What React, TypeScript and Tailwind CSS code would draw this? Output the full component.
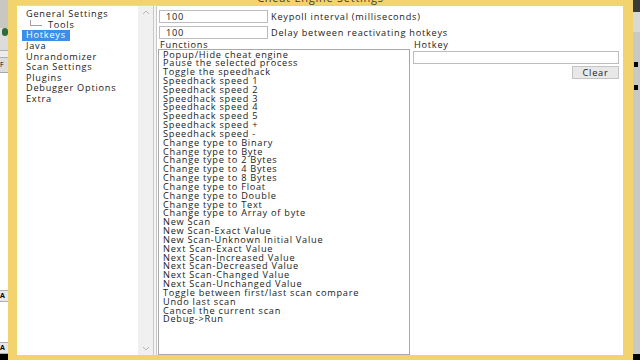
import React from "react";

const tree = [
  { label: "General Settings", indent: 0 },
  { label: "Tools", indent: 1 },
  { label: "Hotkeys", indent: 0, selected: true },
  { label: "Java", indent: 0 },
  { label: "Unrandomizer", indent: 0 },
  { label: "Scan Settings", indent: 0 },
  { label: "Plugins", indent: 0 },
  { label: "Debugger Options", indent: 0 },
  { label: "Extra", indent: 0 },
];

const functions = [
  "Popup/Hide cheat engine",
  "Pause the selected process",
  "Toggle the speedhack",
  "Speedhack speed 1",
  "Speedhack speed 2",
  "Speedhack speed 3",
  "Speedhack speed 4",
  "Speedhack speed 5",
  "Speedhack speed +",
  "Speedhack speed -",
  "Change type to Binary",
  "Change type to Byte",
  "Change type to 2 Bytes",
  "Change type to 4 Bytes",
  "Change type to 8 Bytes",
  "Change type to Float",
  "Change type to Double",
  "Change type to Text",
  "Change type to Array of byte",
  "New Scan",
  "New Scan-Exact Value",
  "New Scan-Unknown Initial Value",
  "Next Scan-Exact Value",
  "Next Scan-Increased Value",
  "Next Scan-Decreased Value",
  "Next Scan-Changed Value",
  "Next Scan-Unchanged Value",
  "Toggle between first/last scan compare",
  "Undo last scan",
  "Cancel the current scan",
  "Debug->Run",
];

function TreePanel() {
  return (
    <div className="flex w-[136px] shrink-0 border-t border-[#d8d8d8] bg-white">
      <div className="flex flex-1 flex-col pt-[3px] pl-[9px]">
        {tree.map((t) => (
          <div key={t.label} className={`flex h-[10.6px] items-center ${t.indent ? "pl-[4px]" : ""}`}>
            {t.indent ? (
              <span className="mr-[6px] mb-[4px] h-[6px] w-[12px] border-b border-l border-[#a0a0a0]" />
            ) : null}
            <span
              className={`leading-[10px] ${
                t.selected ? "-ml-[4px] bg-[#3b8fe8] px-[4px] py-[0.5px] text-white" : "text-[#1a1a1a]"
              }`}
            >
              {t.label}
            </span>
          </div>
        ))}
      </div>
      <div className="flex w-[15px] flex-col items-center justify-between bg-[#f0f0f0] py-[4px]">
        <svg width="8" height="5" viewBox="0 0 8 5">
          <path d="M1 4 L4 1 L7 4" fill="none" stroke="#b8b8b8" strokeWidth="1" />
        </svg>
        <svg width="8" height="5" viewBox="0 0 8 5">
          <path d="M1 1 L4 4 L7 1" fill="none" stroke="#b8b8b8" strokeWidth="1" />
        </svg>
      </div>
    </div>
  );
}

function EditRow({ value, label }: { value: string; label: string }) {
  return (
    <div className="flex h-[13px] items-center">
      <div className="flex h-[13px] w-[109px] items-center border border-[#bcbcbc] bg-white pl-[6px] leading-[10px] text-[#1a1a1a]">
        {value}
      </div>
      <span className="ml-[3px] leading-[10px] text-[#1a1a1a]">{label}</span>
    </div>
  );
}

export default function App() {
  return (
    <div
      className="flex h-[360px] w-[640px] overflow-hidden bg-[#2b2b2b] text-[9.2px] tracking-[0.75px]"
      style={{ fontFamily: '"Open Sans", "DejaVu Sans", sans-serif' }}
    >
      {/* background window on the left */}
      <div className="flex w-[8px] shrink-0 flex-col bg-[#dcdcdc]">
        <div className="h-[28px] bg-[#c8c8c0]" />
        <div className="ml-[2px] h-[8px] w-[6px] rounded-full bg-[#2f6a3a]" />
        <div className="mt-[14px] h-[8px] border-y border-[#b0b0b0] bg-[#ececec]" />
        <div className="mt-[4px] h-[6px] text-[7px] leading-[6px] text-black">F</div>
        <div className="mt-[4px] flex-1 border-t border-[#a8a8a8] bg-white" />
        <div className="h-[12px] border-y border-[#b0b0b0] bg-[#e8e8e8] text-[7px] font-bold leading-[10px]">A</div>
        <div className="h-[40px] bg-white" />
        <div className="h-[12px] border-y border-[#b0b0b0] bg-[#e8e8e8] text-[7px] font-bold leading-[10px]">A</div>
        <div className="h-[6px] bg-black" />
      </div>

      {/* dialog */}
      <div className="flex w-[625px] shrink-0 flex-col bg-[#f3d36e]">
        <div className="flex h-[5px] justify-center overflow-hidden">
          <span className="-mt-[8px] text-[11px] leading-[11px] text-[#3a3a3a]">Cheat Engine Settings</span>
        </div>
        <div className="mb-[5px] ml-[9px] mr-[9px] flex flex-1 bg-white">
          <TreePanel />
          <div className="flex w-[4px] shrink-0 justify-between border-t border-[#d8d8d8] bg-[#f4f4f4]">
            <div className="w-px bg-[#c8c8c8]" />
            <div className="w-px bg-[#c8c8c8]" />
          </div>
          <div className="flex flex-1 flex-col border-t border-r border-[#d0d0d0] pl-[2px] pt-[4px]">
            <div className="flex flex-col gap-[3px]">
              <EditRow value="100" label="Keypoll interval (milliseconds)" />
              <EditRow value="100" label="Delay between reactivating hotkeys" />
            </div>
            <div className="flex flex-1">
              <div className="-ml-[1px] flex w-[252px] flex-col">
                <div className="mt-[1px] h-[9px] pl-[2px] leading-[9px] text-[#1a1a1a]">Functions</div>
                <div className="flex-1 border border-[#a8a8a8] bg-white pl-[4px] pt-[0.5px] text-[#1a1a1a]">
                  {functions.map((f) => (
                    <div key={f} className="h-[8.83px] whitespace-nowrap leading-[8.83px]">
                      {f}
                    </div>
                  ))}
                </div>
              </div>
              <div className="ml-[3px] flex w-[206px] flex-col">
                <div className="mt-[1px] h-[9px] pl-[1px] leading-[9px] text-[#1a1a1a]">Hotkey</div>
                <div className="mt-[2px] h-[13px] border border-[#bcbcbc] bg-white" />
                <div className="mt-[2px] flex justify-end">
                  <div className="flex h-[13px] w-[47px] items-center justify-center border border-[#c4c4c4] bg-[#e8e8e8] leading-[10px] text-[#1a1a1a]">
                    Clear
                  </div>
                </div>
              </div>
            </div>
          </div>
        </div>
      </div>

      {/* background window on the right */}
      <div className="flex flex-1 flex-col bg-[#c8c8c8]">
        <div className="h-[12px] bg-[#3a3a3a]" />
        <div className="h-[20px] bg-[#d8d8d8]" />
        <div className="ml-[1px] mt-[30px] h-[5px] w-[4px] bg-black" />
        <div className="ml-[1px] mt-[18px] h-[5px] w-[4px] bg-black" />
        <div className="flex-1" />
        <div className="h-[6px] bg-black" />
      </div>
    </div>
  );
}
